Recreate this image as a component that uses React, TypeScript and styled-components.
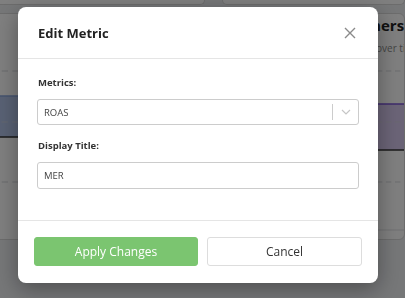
import React from 'react'
import styled, { createGlobalStyle } from 'styled-components'

const GlobalStyle = createGlobalStyle`
    html, body {
        margin: 0;
        padding: 0;
        width: 405px;
        height: 298px;
        overflow: hidden;
        background: #eceef1;
        font-family: "Open Sans", "Liberation Sans", sans-serif;
    }
    * { box-sizing: border-box; }
`;

const ChartLines = ({ area, line, top, bottom, axis }: { area: string; line: string; top: number; bottom: number; axis?: boolean }) => (
    <svg width="100%" height="184" viewBox="0 0 200 184" preserveAspectRatio="none">
        <rect x="0" y={top} width="200" height={bottom - top} fill={area} />
        <line x1="0" x2="200" y1={top} y2={top} stroke={line} strokeWidth="1.5" />
        <line x1="0" x2="200" y1="16" y2="16" stroke="#d4d6da" strokeDasharray="6 4" />
        <line x1="0" x2="200" y1="67" y2="67" stroke="#d4d6da" strokeDasharray="6 4" opacity="0.6" />
        <line x1="0" x2="200" y1={bottom} y2={bottom} stroke="#333" strokeWidth="1.5" />
        <line x1="0" x2="200" y1="127" y2="127" stroke="#d4d6da" strokeDasharray="6 4" />
        {axis && <line x1="0" x2="200" y1="175" y2="175" stroke="#dcdde0" />}
    </svg>
);

const Dashboard = () => (
    <Page>
        <TopRow>
            <CardTail />
            <CardTail />
        </TopRow>
        <CardRow>
            <Card inset={30}>
                <CardHead />
                <ChartLines area="#b2c3e8" line="#8aa6dc" top={41} bottom={82} />
            </Card>
            <Card inset={22}>
                <CardHead>
                    <CardTitle>Returning Customers</CardTitle>
                    <CardSub>Number of new customers over time</CardSub>
                </CardHead>
                <ChartLines area="#d6c8ee" line="#7b55d6" top={49} bottom={95} axis />
            </Card>
        </CardRow>
    </Page>
);

const CloseIcon = () => (
    <svg width="12" height="12" viewBox="0 0 12 12">
        <path d="M1 1 L11 11 M11 1 L1 11" stroke="#8a8a8a" strokeWidth="1.4" fill="none" />
    </svg>
);

const Chevron = () => (
    <svg width="10" height="6" viewBox="0 0 10 6">
        <path d="M1 1 L5 5 L9 1" stroke="#c6c6c6" strokeWidth="1.2" fill="none" />
    </svg>
);

const EditMetricModal = () => (
    <Dialog>
        <Header>
            <Title>Edit Metric</Title>
            <CloseButton aria-label="Close"><CloseIcon /></CloseButton>
        </Header>
        <Body>
            <Label>Metrics:</Label>
            <SelectBox>
                <SelectValue>ROAS</SelectValue>
                <Separator />
                <Indicator><Chevron /></Indicator>
            </SelectBox>
            <Label>Display Title:</Label>
            <TextInput defaultValue="MER" />
        </Body>
        <Footer>
            <Button primary>Apply Changes</Button>
            <Button>Cancel</Button>
        </Footer>
    </Dialog>
);

const App = () => (
    <>
        <GlobalStyle />
        <Dashboard />
        <Backdrop>
            <EditMetricModal />
        </Backdrop>
    </>
);

const Page = styled.div`
    width: 405px;
    height: 298px;
    display: flex;
    flex-direction: column;
    gap: 8px;
`;
const TopRow = styled.div`
    display: grid;
    grid-template-columns: 215px 1fr;
    gap: 17px;
    margin-left: -10px;
`;
const CardTail = styled.div`
    height: 5px;
    background: #ffffff;
    border: 1px solid #d8d8d8;
    border-top: none;
    border-radius: 0 0 6px 6px;
`;
const CardRow = styled.div`
    display: grid;
    grid-template-columns: 215px 1fr;
    gap: 17px;
    margin-left: -10px;
`;
const Card = styled.div<{ inset: number }>`
    height: 227px;
    background: #ffffff;
    border: 1px solid #d8d8d8;
    border-radius: 6px;
    overflow: hidden;
    white-space: nowrap;
    & > div:first-child {
        padding-left: ${({ inset }) => inset}px;
    }
`;
const CardHead = styled.div`
    height: 41px;
`;
const CardTitle = styled.div`
    font-size: 15px;
    font-weight: 700;
    color: #222;
    line-height: 22px;
`;
const CardSub = styled.div`
    font-size: 10px;
    color: #8a8a8a;
    line-height: 14px;
    margin-top: 5px;
    margin-left: 4px;
`;
const Backdrop = styled.div`
    position: fixed;
    inset: 0;
    background: rgba(0, 0, 0, 0.5);
    padding: 7px 0 0 18px;
`;
const Dialog = styled.div`
    width: 360px;
    height: 276px;
    background: #ffffff;
    border-radius: 8px;
    box-shadow: 0 6px 22px rgba(0, 0, 0, 0.35);
    display: flex;
    flex-direction: column;
`;
const Header = styled.div`
    height: 52px;
    display: flex;
    align-items: center;
    justify-content: space-between;
    padding: 0 22px 0 20px;
    border-bottom: 1px solid #e5e5e5;
`;
const Title = styled.h4`
    margin: 0;
    font-size: 13px;
    font-weight: 700;
    color: #222;
`;
const CloseButton = styled.button`
    border: none;
    background: none;
    padding: 0;
    display: flex;
    cursor: pointer;
`;
const Body = styled.div`
    padding: 17px 19px 0 19px;
    height: 162px;
    border-bottom: 1px solid #e5e5e5;
`;
const Label = styled.div`
    font-size: 9.5px;
    font-weight: 700;
    color: #333;
    line-height: 14px;
    margin: 0 0 9px 1px;
`;
const SelectBox = styled.div`
    height: 26px;
    border: 1px solid #cccccc;
    border-radius: 3px;
    display: flex;
    align-items: center;
    margin-bottom: 14px;
`;
const SelectValue = styled.span`
    flex: 1;
    padding-left: 6px;
    font-size: 9.5px;
    color: #444;
`;
const Separator = styled.span`
    width: 1px;
    align-self: stretch;
    margin: 4px 0;
    background: #cccccc;
`;
const Indicator = styled.span`
    width: 25px;
    display: flex;
    justify-content: center;
`;
const TextInput = styled.input`
    width: 100%;
    height: 27px;
    border: 1px solid #cccccc;
    border-radius: 3px;
    padding: 0 6px;
    font-family: "Open Sans", "Liberation Sans", sans-serif;
    font-size: 9.5px;
    color: #444;
    outline: none;
`;
const Footer = styled.div`
    display: grid;
    grid-template-columns: 164px 155px;
    gap: 9px;
    padding: 16px 16px 0 16px;
`;
const Button = styled.button<{ primary?: boolean }>`
    height: 29px;
    border-radius: 3px;
    font-family: "Open Sans", "Liberation Sans", sans-serif;
    font-size: 12px;
    cursor: pointer;
    background: ${({ primary }) => (primary ? '#7bc570' : '#ffffff')};
    color: ${({ primary }) => (primary ? '#ffffff' : '#333333')};
    border: 1px solid ${({ primary }) => (primary ? '#7bc570' : '#dddddd')};
`;

export default App;
